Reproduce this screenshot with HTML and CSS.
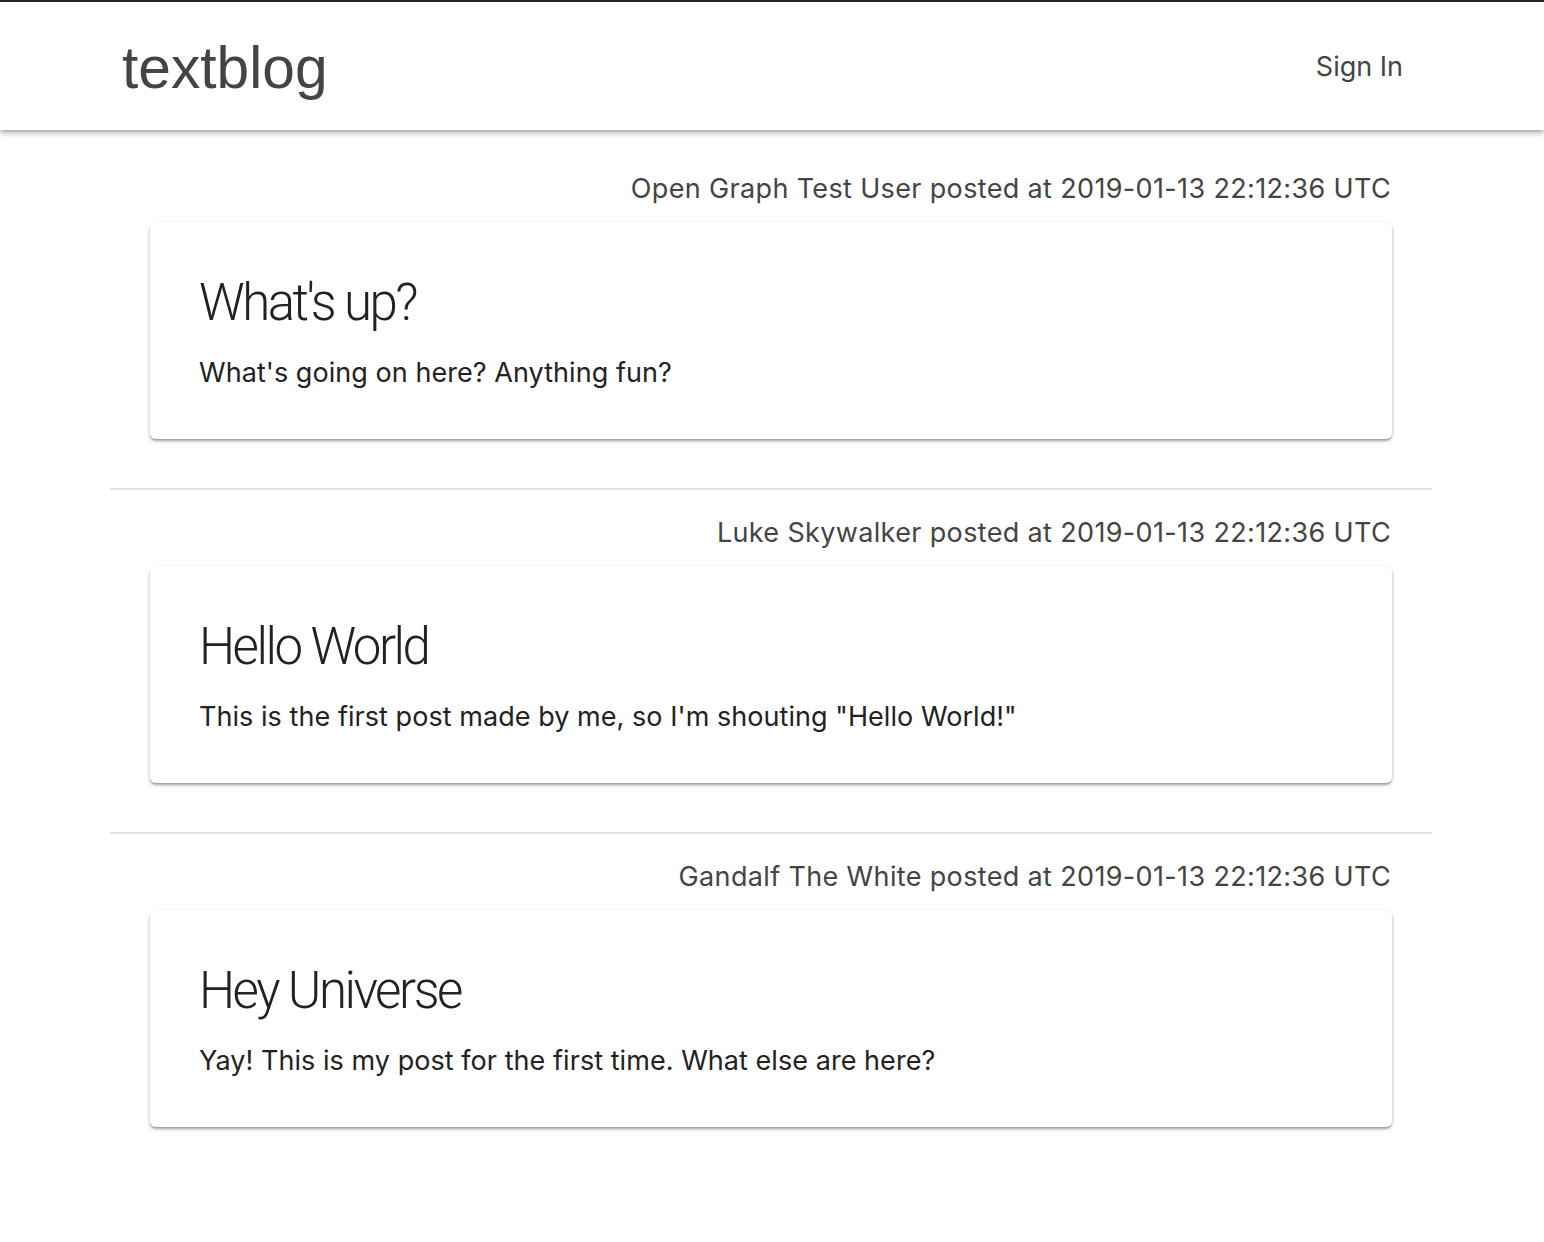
FILE: index.html
```html
<!DOCTYPE html>
<html lang="en">
<head>
<meta charset="utf-8">
<title>textblog</title>
<link rel="stylesheet" href="styles.css">
</head>
<body>
<header class="appbar">
  <div class="brand">textblog</div>
  <a class="signin" href="#">Sign In</a>
</header>
<main class="container">
  <section class="post">
    <div class="meta">Open Graph Test User posted at 2019-01-13 22:12:36 UTC</div>
    <article class="card">
      <h2 class="title">What's up?</h2>
      <p class="body">What's going on here? Anything fun?</p>
    </article>
  </section>
  <hr class="divider">
  <section class="post">
    <div class="meta">Luke Skywalker posted at 2019-01-13 22:12:36 UTC</div>
    <article class="card">
      <h2 class="title">Hello World</h2>
      <p class="body">This is the first post made by me, so I'm shouting "Hello World!"</p>
    </article>
  </section>
  <hr class="divider">
  <section class="post">
    <div class="meta">Gandalf The White posted at 2019-01-13 22:12:36 UTC</div>
    <article class="card">
      <h2 class="title">Hey Universe</h2>
      <p class="body">Yay! This is my post for the first time. What else are here?</p>
    </article>
  </section>
</main>
</body>
</html>
```
FILE: styles.css
```css
html, body {
  margin: 0;
  padding: 0;
  background: #fff;
}
body {
  font-family: "Inter", "Roboto", "Noto Sans", sans-serif;
  border-top: 2px solid #222;
}
.appbar {
  height: 128px;
  display: flex;
  align-items: center;
  justify-content: space-between;
  padding: 0 141px 0 122px;
  background: #fff;
  box-shadow: 0 2px 4px -1px rgba(0,0,0,0.25), 0 4px 5px 0 rgba(0,0,0,0.14), 0 1px 10px 0 rgba(0,0,0,0.10);
  position: relative;
  z-index: 1;
}
.brand {
  font-family: "Liberation Sans", Arial, sans-serif;
  font-size: 58.7px;
  color: #444;
  line-height: 1;
  margin-top: 4px;
}
.signin {
  font-size: 27px;
  color: #444;
  text-decoration: none;
  margin-top: 1px;
}
.container {
  width: 1322px;
  margin-left: 110px;
  padding-top: 39px;
  padding-bottom: 100px;
}
.post {
  display: flex;
  flex-direction: column;
}
.meta {
  text-align: right;
  font-size: 27px;
  line-height: 39px;
  letter-spacing: 0.35px;
  color: #444;
  padding-right: 41px;
  margin-bottom: 14px;
}
.card {
  margin: 0 40px;
  background: #fff;
  border-radius: 6px;
  padding: 51px 50px 47px 49px;
  box-shadow: 0 2px 4px 0 rgba(0,0,0,0.22), 0 2px 2px 0 rgba(0,0,0,0.16), 0 3px 2px -2px rgba(0,0,0,0.14);
}
.title {
  margin: 0;
  font-family: "Roboto", "Inter", sans-serif;
  font-size: 51px;
  font-weight: 300;
  line-height: 60px;
  letter-spacing: -2.5px;
  color: #222;
}
.body {
  margin: 20px 0 0;
  font-size: 27px;
  line-height: 39px;
  letter-spacing: 0.05px;
  color: #222;
}
.divider {
  border: none;
  height: 2px;
  background: #e2e2e2;
  margin: 49px 0 23px;
}
```
